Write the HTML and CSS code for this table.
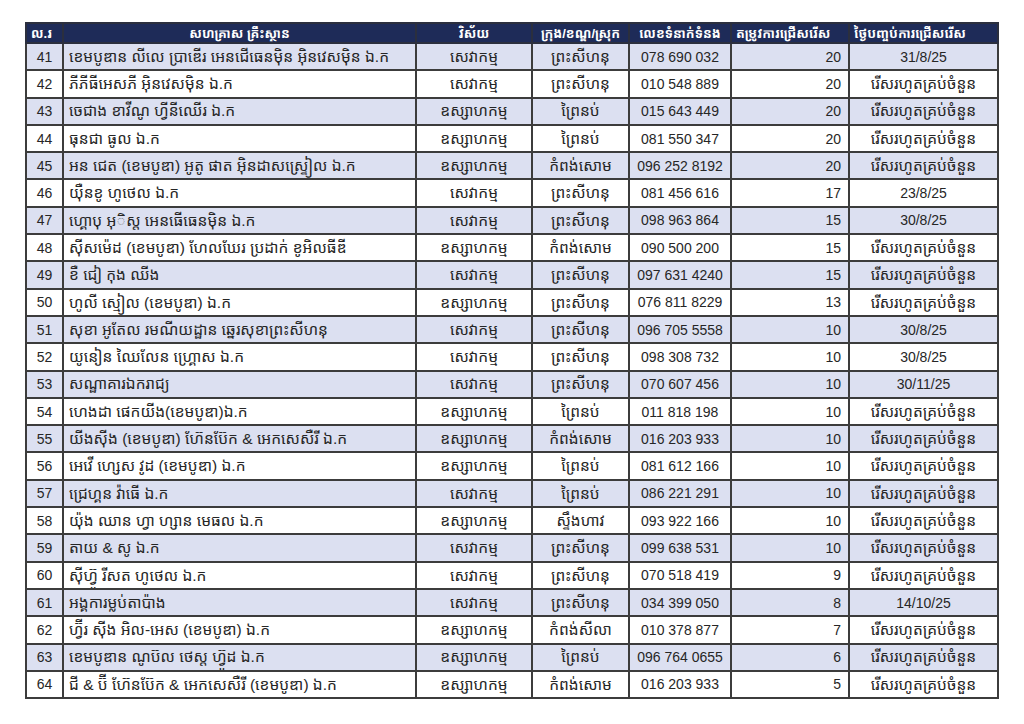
FILE: index.html
```html
<!DOCTYPE html>
<html lang="km">
<head>
<meta charset="utf-8">
<title>បញ្ជីសហគ្រាស</title>
<link rel="stylesheet" href="styles.css">
</head>
<body>
<div class="page">
<table class="jobs">
<colgroup>
<col class="c-no"><col class="c-name"><col class="c-sector"><col class="c-city"><col class="c-phone"><col class="c-need"><col class="c-end">
</colgroup>
<thead>
<tr>
<th class="left">ល.រ</th>
<th>សហគ្រាស គ្រឹះស្ថាន</th>
<th>វិស័យ</th>
<th>ក្រុង/ខណ្ឌ/ស្រុក</th>
<th>លេខទំនាក់ទំនង</th>
<th class="left">តម្រូវការជ្រើសរើស</th>
<th class="left">ថ្ងៃបញ្ចប់ការជ្រើសរើស</th>
</tr>
</thead>
<tbody>
<tr><td class="no">41</td><td class="name">ខេមបូឌាន លីលេ ប្រាឌើរ អេនជើធេនម៉ិន អ៊ិនវេសម៉ិន ឯ.ក</td><td class="km">សេវាកម្ម</td><td class="km">ព្រះសីហនុ</td><td class="num">078 690 032</td><td class="need">20</td><td class="num">31/8/25</td></tr>
<tr><td class="no">42</td><td class="name">ភីភីធីអេសភី អ៊ិនវេសម៉ិន ឯ.ក</td><td class="km">សេវាកម្ម</td><td class="km">ព្រះសីហនុ</td><td class="num">010 548 889</td><td class="need">20</td><td class="km">រើសរហូតគ្រប់ចំនួន</td></tr>
<tr><td class="no">43</td><td class="name">ចេជាង ខាវីណូ ហ្វីនីឈើរ ឯ.ក</td><td class="km">ឧស្សាហកម្ម</td><td class="km">ព្រៃនប់</td><td class="num">015 643 449</td><td class="need">20</td><td class="km">រើសរហូតគ្រប់ចំនួន</td></tr>
<tr><td class="no">44</td><td class="name">ធុនជា ធូល ឯ.ក</td><td class="km">ឧស្សាហកម្ម</td><td class="km">ព្រៃនប់</td><td class="num">081 550 347</td><td class="need">20</td><td class="km">រើសរហូតគ្រប់ចំនួន</td></tr>
<tr><td class="no">45</td><td class="name">អន ជេត (ខេមបូឌា) អូតូ ផាត អ៊ិនដាសស្ទ្រៀល ឯ.ក</td><td class="km">ឧស្សាហកម្ម</td><td class="km">កំពង់សោម</td><td class="num">096 252 8192</td><td class="need">20</td><td class="km">រើសរហូតគ្រប់ចំនួន</td></tr>
<tr><td class="no">46</td><td class="name">យ៉ឺនខូ ហូថេល ឯ.ក</td><td class="km">សេវាកម្ម</td><td class="km">ព្រះសីហនុ</td><td class="num">081 456 616</td><td class="need">17</td><td class="num">23/8/25</td></tr>
<tr><td class="no">47</td><td class="name">ហ្គោបុ អុ៊ិស្ត អេនធើធេនម៉ិន ឯ.ក</td><td class="km">សេវាកម្ម</td><td class="km">ព្រះសីហនុ</td><td class="num">098 963 864</td><td class="need">15</td><td class="num">30/8/25</td></tr>
<tr><td class="no">48</td><td class="name">ស៊ីសម៉េដ (ខេមបូឌា) ហែលឃែរ ប្រដាក់ ខូអិលធីឌី</td><td class="km">ឧស្សាហកម្ម</td><td class="km">កំពង់សោម</td><td class="num">090 500 200</td><td class="need">15</td><td class="km">រើសរហូតគ្រប់ចំនួន</td></tr>
<tr><td class="no">49</td><td class="name">ខឺ ជៀ កុង ឈីង</td><td class="km">សេវាកម្ម</td><td class="km">ព្រះសីហនុ</td><td class="num">097 631 4240</td><td class="need">15</td><td class="km">រើសរហូតគ្រប់ចំនួន</td></tr>
<tr><td class="no">50</td><td class="name">ហូលី ស្មៀល (ខេមបូឌា) ឯ.ក</td><td class="km">ឧស្សាហកម្ម</td><td class="km">ព្រះសីហនុ</td><td class="num">076 811 8229</td><td class="need">13</td><td class="km">រើសរហូតគ្រប់ចំនួន</td></tr>
<tr><td class="no">51</td><td class="name">សុខា អូតែល រមណីយដ្ឋាន ឆ្នេរសុខាព្រះសីហនុ</td><td class="km">សេវាកម្ម</td><td class="km">ព្រះសីហនុ</td><td class="num">096 705 5558</td><td class="need">10</td><td class="num">30/8/25</td></tr>
<tr><td class="no">52</td><td class="name">យូនៀន ឈៃលែន ហ្គ្រោស ឯ.ក</td><td class="km">សេវាកម្ម</td><td class="km">ព្រះសីហនុ</td><td class="num">098 308 732</td><td class="need">10</td><td class="num">30/8/25</td></tr>
<tr><td class="no">53</td><td class="name">សណ្ឋាគារឯករាជ្យ</td><td class="km">សេវាកម្ម</td><td class="km">ព្រះសីហនុ</td><td class="num">070 607 456</td><td class="need">10</td><td class="num">30/11/25</td></tr>
<tr><td class="no">54</td><td class="name">ហេងដា ផេកយីង(ខេមបូឌា)ឯ.ក</td><td class="km">ឧស្សាហកម្ម</td><td class="km">ព្រៃនប់</td><td class="num">011 818 198</td><td class="need">10</td><td class="km">រើសរហូតគ្រប់ចំនួន</td></tr>
<tr><td class="no">55</td><td class="name">យីងស៊ីង (ខេមបូឌា) ហ៊ែនប៊ែក &amp; អេកសេសឺរី ឯ.ក</td><td class="km">ឧស្សាហកម្ម</td><td class="km">កំពង់សោម</td><td class="num">016 203 933</td><td class="need">10</td><td class="km">រើសរហូតគ្រប់ចំនួន</td></tr>
<tr><td class="no">56</td><td class="name">អេវើ ហ្សេស វូដ (ខេមបូឌា) ឯ.ក</td><td class="km">ឧស្សាហកម្ម</td><td class="km">ព្រៃនប់</td><td class="num">081 612 166</td><td class="need">10</td><td class="km">រើសរហូតគ្រប់ចំនួន</td></tr>
<tr><td class="no">57</td><td class="name">ជ្រេហ្គន វ៉ាធើ ឯ.ក</td><td class="km">សេវាកម្ម</td><td class="km">ព្រៃនប់</td><td class="num">086 221 291</td><td class="need">10</td><td class="km">រើសរហូតគ្រប់ចំនួន</td></tr>
<tr><td class="no">58</td><td class="name">យ៉ុង ឈាន ហ្វា ហ្សាន មេធល ឯ.ក</td><td class="km">ឧស្សាហកម្ម</td><td class="km">ស្ទឹងហាវ</td><td class="num">093 922 166</td><td class="need">10</td><td class="km">រើសរហូតគ្រប់ចំនួន</td></tr>
<tr><td class="no">59</td><td class="name">តាយ &amp; សូ ឯ.ក</td><td class="km">សេវាកម្ម</td><td class="km">ព្រះសីហនុ</td><td class="num">099 638 531</td><td class="need">10</td><td class="km">រើសរហូតគ្រប់ចំនួន</td></tr>
<tr><td class="no">60</td><td class="name">ស៊ីហ៊្វូ រីសត ហូថេល ឯ.ក</td><td class="km">សេវាកម្ម</td><td class="km">ព្រះសីហនុ</td><td class="num">070 518 419</td><td class="need">9</td><td class="km">រើសរហូតគ្រប់ចំនួន</td></tr>
<tr><td class="no">61</td><td class="name">អង្គការម្លប់តាប៉ាង</td><td class="km">សេវាកម្ម</td><td class="km">ព្រះសីហនុ</td><td class="num">034 399 050</td><td class="need">8</td><td class="num">14/10/25</td></tr>
<tr><td class="no">62</td><td class="name">ហ្វ៊ីរ ស៊ីង អិល-អេស (ខេមបូឌា) ឯ.ក</td><td class="km">ឧស្សាហកម្ម</td><td class="km">កំពង់សីលា</td><td class="num">010 378 877</td><td class="need">7</td><td class="km">រើសរហូតគ្រប់ចំនួន</td></tr>
<tr><td class="no">63</td><td class="name">ខេមបូឌាន ណូប៊ល ថេស្ត ហ្វ៊ូដ ឯ.ក</td><td class="km">ឧស្សាហកម្ម</td><td class="km">ព្រៃនប់</td><td class="num">096 764 0655</td><td class="need">6</td><td class="km">រើសរហូតគ្រប់ចំនួន</td></tr>
<tr><td class="no">64</td><td class="name">ជី &amp; ប៊ី ហ៊ែនប៊ែក &amp; អេកសេសឺរី (ខេមបូឌា) ឯ.ក</td><td class="km">ឧស្សាហកម្ម</td><td class="km">កំពង់សោម</td><td class="num">016 203 933</td><td class="need">5</td><td class="km">រើសរហូតគ្រប់ចំនួន</td></tr>
</tbody>
</table>
</div>
</body>
</html>
```

FILE: styles.css
```css
html, body {
  margin: 0;
  padding: 0;
  background: #ffffff;
}
.page {
  padding: 22px 0 0 25px;
}
.jobs {
  border-collapse: collapse;
  table-layout: fixed;
  width: 972px;
  font-family: "Liberation Sans", "Noto Sans Khmer", "Khmer OS", "Noto Sans", sans-serif;
  color: #262626;
}
.c-no { width: 37px; }
.c-name { width: 353px; }
.c-sector { width: 116px; }
.c-city { width: 97px; }
.c-phone { width: 102px; }
.c-need { width: 118px; }
.c-end { width: 149px; }

.jobs th {
  background: #1e2b58;
  color: #ffffff;
  font-weight: bold;
  font-size: 13px;
  height: 18px;
  padding: 0 2px;
  line-height: 13px;
  text-align: center;
  border: 2px solid #2b2f3e;
  white-space: nowrap;
  overflow: hidden;
}
.jobs th.left {
  text-align: left;
  padding-left: 4px;
}
.jobs td {
  border: 2px solid #3c3c3c;
  height: 27.3px;
  padding: 0 7px;
  font-size: 15.5px;
  line-height: 1;
  white-space: nowrap;
  overflow: hidden;
  box-sizing: border-box;
}
.jobs tbody tr:nth-child(odd) td {
  background: #dce0f1;
}
.jobs tbody tr:nth-child(even) td {
  background: #ffffff;
}
.jobs td.no {
  text-align: center;
  font-size: 14px;
  padding: 0;
}
.jobs td.name {
  text-align: left;
  padding-left: 5px;
}
.jobs td.km {
  text-align: center;
}
.jobs td.num {
  text-align: center;
  font-size: 14px;
}
.jobs td.need {
  text-align: right;
  font-size: 14px;
}
```
